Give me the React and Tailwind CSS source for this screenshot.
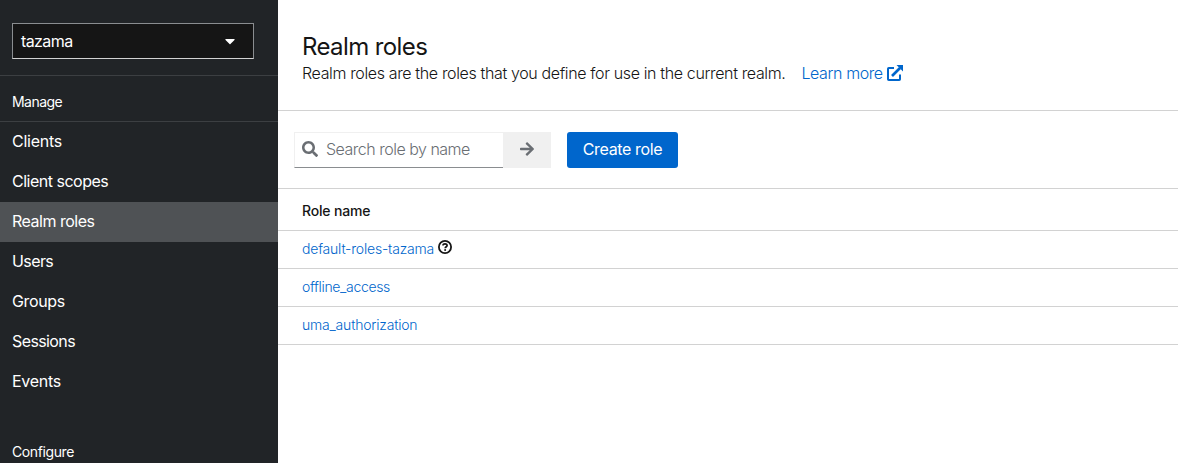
const MANAGE_ITEMS = [
  { label: "Clients", tracking: "tracking-[-0.25px]" },
  { label: "Client scopes", tracking: "tracking-[-0.5px]" },
  { label: "Realm roles", tracking: "tracking-[-0.5px]", current: true },
  { label: "Users", tracking: "tracking-[-0.6px]" },
  { label: "Groups", tracking: "tracking-[-0.35px]" },
  { label: "Sessions", tracking: "tracking-[-0.6px]" },
  { label: "Events", tracking: "tracking-[-0.3px]" },
];

const ROLES = [
  { name: "default-roles-tazama", tracking: "tracking-[-0.2px]", help: true },
  { name: "offline_access", tracking: "tracking-[-0.33px]" },
  { name: "uma_authorization", tracking: "tracking-[-0.2px]" },
];

function CaretDownIcon() {
  return (
    <svg width="10" height="16" viewBox="0 0 320 512" fill="currentColor" aria-hidden="true">
      <path d="M31.3 192h257.3c17.8 0 26.7 21.5 14.1 34.1L174.1 354.8c-7.8 7.8-20.5 7.8-28.3 0L17.2 226.1C4.6 213.5 13.5 192 31.3 192z" />
    </svg>
  );
}

function SearchIcon() {
  return (
    <svg width="16" height="16" viewBox="0 0 512 512" fill="currentColor" aria-hidden="true">
      <path d="M505 442.7L405.3 343c-4.5-4.5-10.600-7-17-7H372c27.600-35.300 44-79.700 44-128C416 93.100 322.900 0 208 0S0 93.100 0 208s93.100 208 208 208c48.300 0 92.700-16.400 128-44v16.300c0 6.400 2.500 12.500 7 17l99.700 99.700c9.400 9.400 24.600 9.400 33.900 0l28.300-28.300c9.400-9.400 9.400-24.600.1-34zM208 336c-70.700 0-128-57.200-128-128 0-70.700 57.200-128 128-128 70.700 0 128 57.200 128 128 0 70.700-57.200 128-128 128z" />
    </svg>
  );
}

function ArrowRightIcon() {
  return (
    <svg width="14" height="16" viewBox="0 0 448 512" fill="currentColor" aria-hidden="true">
      <path d="M190.500 66.900l22.200-22.200c9.400-9.400 24.600-9.400 33.900 0L441 239c9.400 9.400 9.400 24.600 0 33.900L246.600 467.300c-9.400 9.400-24.600 9.400-33.900 0l-22.200-22.200c-9.500-9.500-9.300-25 .4-34.300L311.400 296H24c-13.300 0-24-10.700-24-24v-32c0-13.300 10.700-24 24-24h287.400L190.900 101.200c-9.800-9.300-10-24.800-.4-34.300z" />
    </svg>
  );
}

function ExternalLinkIcon() {
  return (
    <svg width="16" height="16" viewBox="0 0 16 16" fill="none" stroke="currentColor" strokeWidth="2" aria-hidden="true">
      <path d="M7 3H1.800Q1 3 1 3.800V14.200Q1 15 1.800 15H12.200Q13 15 13 14.200V9.500" />
      <path d="M5 11L13 3" strokeWidth="2.600" />
      <path d="M9.500 0H16V6.500Z" fill="currentColor" stroke="none" />
    </svg>
  );
}

function HelpIcon() {
  return (
    <svg width="14" height="14" viewBox="0 0 14 14" fill="none" stroke="currentColor" aria-hidden="true">
      <circle cx="7" cy="7" r="6.100" strokeWidth="1.800" />
      <path d="M5 5.600C5 4.400 5.900 3.800 7 3.800S9.100 4.500 9.100 5.500C9.100 6.800 7.200 6.700 7.200 8.300" strokeWidth="1.700" />
      <circle cx="7.150" cy="10" r="1" fill="currentColor" stroke="none" />
    </svg>
  );
}

function Sidebar() {
  return (
    <nav className="flex w-[278px] shrink-0 flex-col bg-[#212427] text-white">
      <div className="h-[76px] border-b border-[#3c3f42] pt-[23px] pl-3">
        <button className="flex h-9 w-[242px] items-center justify-between border border-[#8a8d90] border-b-[#d2d2d2] bg-[#151515] pr-[18px] pl-2">
          <span className="text-base leading-6 tracking-[-0.6px]">tazama</span>
          <CaretDownIcon />
        </button>
      </div>
      <h2 className="flex h-[46px] items-center border-b border-[#3c3f42] pt-[7px] pl-3 text-sm tracking-[-0.55px]">
        Manage
      </h2>
      <ul>
        {MANAGE_ITEMS.map((item) => (
          <li
            key={item.label}
            className={`flex h-10 items-center pb-0.5 pl-3 text-base ${item.tracking} ${item.current ? "bg-[#4f5255]" : ""}`}
          >
            {item.label}
          </li>
        ))}
      </ul>
      <h2 className="mt-[39px] pl-3 text-sm leading-[21px] tracking-[-0.4px]">Configure</h2>
    </nav>
  );
}

function PageHeader() {
  return (
    <header className="h-[111px] border-b border-[#d2d2d2] pt-8 pl-6">
      <h1 className="text-2xl leading-[29px] tracking-[-0.6px]">Realm roles</h1>
      <p className="flex items-center text-base leading-6 font-light">
        <span className="tracking-[-0.36px]">
          Realm roles are the roles that you define for use in the current realm.
        </span>
        <a className="ml-4 flex items-center gap-1 text-[#0066cc]">
          <span className="tracking-[-0.4px]">Learn more</span>
          <ExternalLinkIcon />
        </a>
      </p>
    </header>
  );
}

function Toolbar() {
  return (
    <div className="flex h-[78px] items-start border-b border-[#d2d2d2] pt-[21px] pl-4">
      <div className="flex h-9 w-[209px] items-center gap-2 border border-r-0 border-[#f0f0f0] border-b-[#8a8d90] pb-0.5 pl-[7px] text-[#6a6e73]">
        <SearchIcon />
        <span className="text-base font-light tracking-[-0.5px]">Search role by name</span>
      </div>
      <button className="flex h-9 w-12 items-center justify-center bg-[#f0f0f0] pb-0.5 text-[#6a6e73]">
        <ArrowRightIcon />
      </button>
      <button className="ml-4 h-9 w-[111px] rounded-[3px] bg-[#0066cc] pb-0.5 text-base tracking-[-0.36px] text-white">
        Create role
      </button>
    </div>
  );
}

function RolesTable() {
  return (
    <div className="text-sm">
      <div className="flex h-[42px] items-center border-b border-[#d2d2d2] pt-0.5 pl-6 font-medium tracking-[-0.17px]">
        Role name
      </div>
      {ROLES.map((role) => (
        <div key={role.name} className="flex h-[38px] items-center gap-1 border-b border-[#d2d2d2] pb-0.5 pl-6 font-light">
          <a className={`text-[#0066cc] ${role.tracking}`}>{role.name}</a>
          {role.help && (
            <span className="pb-1">
              <HelpIcon />
            </span>
          )}
        </div>
      ))}
    </div>
  );
}

export default function App() {
  return (
    <div className="flex h-[463px] w-[1178px] overflow-hidden bg-white font-['Inter',sans-serif] text-[#151515]">
      <Sidebar />
      <main className="min-w-0 flex-1">
        <PageHeader />
        <Toolbar />
        <RolesTable />
      </main>
    </div>
  );
}
